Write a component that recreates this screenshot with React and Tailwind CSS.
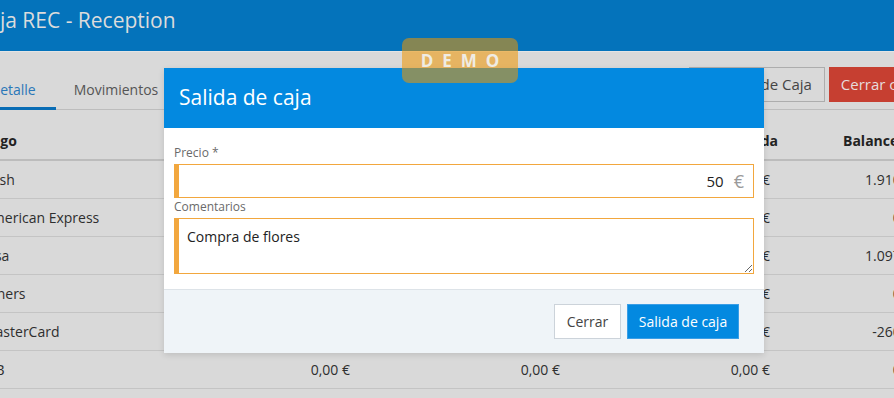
import React from "react";

const rows = [
  { name: "Cash", a: "0,00 €", b: "0,00 €", c: "0,00 €", bal: "1.910,00 €" },
  { name: "American Express", a: "0,00 €", b: "0,00 €", c: "0,00 €", bal: "0,00 €" },
  { name: "Visa", a: "0,00 €", b: "0,00 €", c: "0,00 €", bal: "1.097,00 €" },
  { name: "Diners", a: "0,00 €", b: "0,00 €", c: "0,00 €", bal: "0,00 €" },
  { name: "MasterCard", a: "0,00 €", b: "0,00 €", c: "0,00 €", bal: "-260,00 €" },
  { name: "JCB", a: "0,00 €", b: "0,00 €", c: "0,00 €", bal: "0,00 €" },
];

const font = { fontFamily: '"Open Sans", "Noto Sans", sans-serif' };

const App = () => {
  return (
    <div
      className="relative w-[894px] h-[398px] overflow-hidden bg-[#d9d9d9] text-[#2e2e2e]"
      style={font}
    >
      {/* background page (dimmed) */}
      <div className="-ml-[25px] w-[1020px]">
        <div className="h-[52px] bg-[#0473bb] border-b border-[#e4e4e4] flex items-center">
          <h1 className="text-[21px] text-[#dcdcdc] -mt-[10px]">Caja REC - Reception</h1>
        </div>

        <div className="h-[58px] flex items-end justify-between border-b border-[#bdbdbd]">
          <div className="flex text-[14px]">
            <div className="pl-[15px] pr-[20px] pb-[7px] leading-[20px] border-b-[3px] border-[#0a6db5] text-[#2a77b8] -mb-px">
              Detalle
            </div>
            <div className="pl-[18px] pr-[16px] pb-[7px] leading-[20px] text-[#555]">Movimientos</div>
          </div>
          <div className="flex gap-[4px] self-start mt-[15px] mr-[66px]">
            <button className="h-[35px] px-[12px] border border-[#adadad] text-[15px] text-[#444]">
              Entrada de Caja
            </button>
            <button className="h-[35px] px-[12px] bg-[#c63f31] text-[15px] text-[#e6dcdc]">
              Cerrar caja
            </button>
          </div>
        </div>

        <div className="mt-[11px] text-[14px]">
          <div className="grid grid-cols-[173px_210px_210px_210px_210px] h-[40px] items-center border-b-2 border-[#bcbcbc] font-bold text-[#222]">
            <div className="pl-2">Pago</div>
            <div className="text-right">Apertura</div>
            <div className="text-right">Entrada</div>
            <div className="text-right">Salida</div>
            <div className="pl-[65px]">Balance</div>
          </div>
          {rows.map((r) => (
            <div
              key={r.name}
              className="grid grid-cols-[173px_210px_210px_210px_210px] h-[38px] items-center border-b border-[#c4c4c4]"
            >
              <div className="pl-2">{r.name}</div>
              <div className="text-right pr-2">{r.a}</div>
              <div className="text-right pr-2">{r.b}</div>
              <div className="text-right pr-2">{r.c}</div>
              <div className="text-right pr-[56px]">{r.bal}</div>
            </div>
          ))}
        </div>
      </div>

      {/* modal */}
      <div className="absolute left-[164px] top-[68px] w-[600px] bg-white shadow-[0_2px_6px_rgba(0,0,0,0.12)]">
        <div className="h-[60px] bg-[#0389e0] flex items-center px-[15px]">
          <h2 className="text-[21px] text-white">Salida de caja</h2>
        </div>
        <div className="px-[10px] pt-[17px] pb-[15px]">
          <label className="block text-[12px] leading-[16px] text-[#6a6a6a]">Precio *</label>
          <div className="mt-[3px] h-[34px] flex items-center border border-l-[5px] border-[#f2a73e]">
            <input
              readOnly
              value="50"
              className="flex-1 min-w-0 text-right text-[15px] text-[#222] outline-none bg-transparent"
              style={font}
            />
            <span className="pl-[10px] pr-[9px] text-[18px] text-[#9a9a9a]">€</span>
          </div>
          <label className="block mt-[1px] text-[12px] leading-[16px] text-[#6a6a6a]">Comentarios</label>
          <textarea
            readOnly
            value="Compra de flores"
            className="mt-[3px] block w-full h-[56px] border border-l-[5px] border-[#f2a73e] pl-2 pt-[7px] text-[14px] text-[#222] outline-none"
            style={font}
          />
        </div>
        <div className="h-[64px] bg-[#eff4f8] border-t border-[#dde3e8] flex items-center justify-end gap-[6px] pr-[25px]">
          <button className="h-[35px] w-[67px] bg-white border border-[#ccd3da] text-[14px] text-[#444]">
            Cerrar
          </button>
          <button className="h-[35px] w-[112px] bg-[#0389e0] border border-[#3a9ee6] text-[14px] text-white">
            Salida de caja
          </button>
        </div>
      </div>

      {/* demo badge */}
      <div className="absolute left-[402px] top-[38px] w-[116px] h-[45px] rounded-[7px] bg-[rgba(240,150,0,0.55)] flex items-center justify-center">
        <span className="text-[17px] font-bold tracking-[9px] pl-[9px] text-[#efece4]">DEMO</span>
      </div>
    </div>
  );
};

export default App;
